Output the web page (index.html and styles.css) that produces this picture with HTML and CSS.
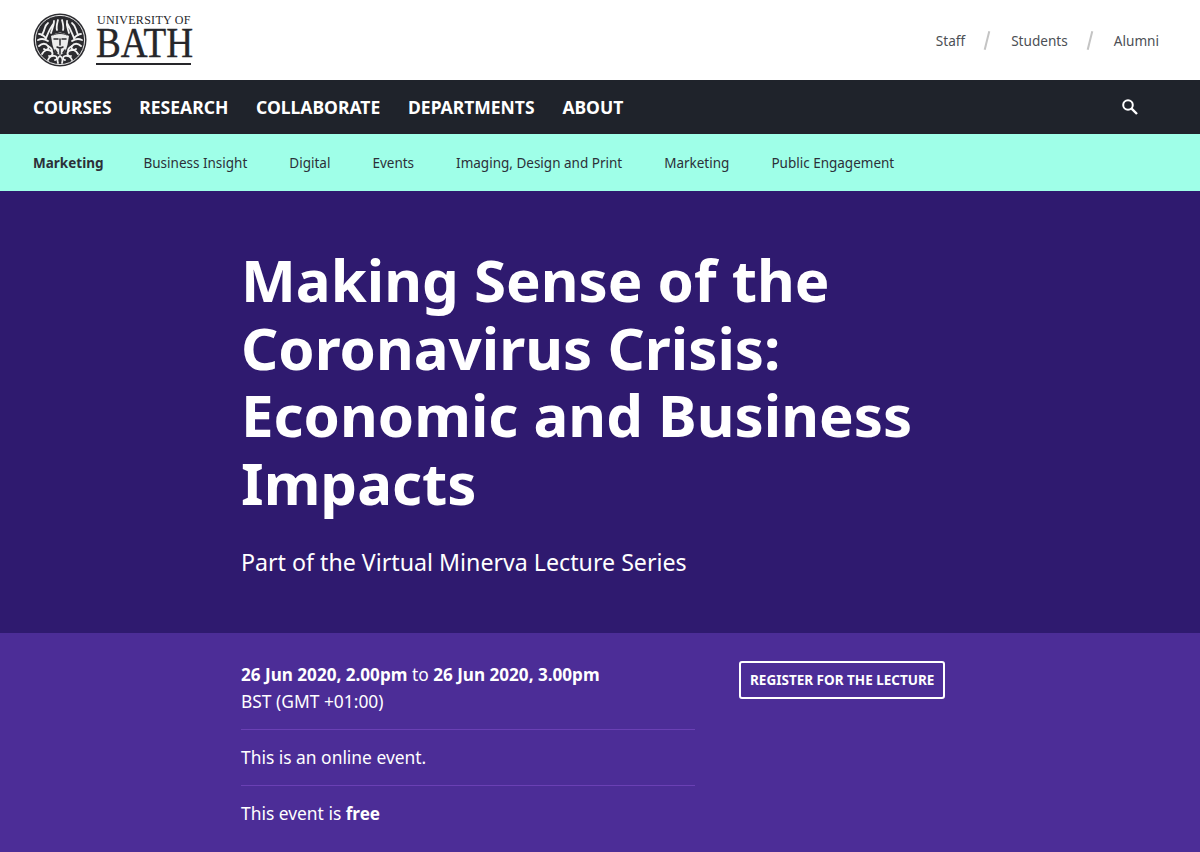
FILE: index.html
```html
<!DOCTYPE html>
<html lang="en">
<head>
<meta charset="utf-8">
<title>Making Sense of the Coronavirus Crisis</title>
<link rel="stylesheet" href="styles.css">
</head>
<body>
<header class="top">
  <a class="logo" href="#">
    <svg class="crest" width="54" height="54" viewBox="0 0 54 54" fill="none">
      <circle cx="27" cy="27" r="26.5" fill="#2b2b2f"/>
      <circle cx="27" cy="27" r="24.6" stroke="#e8e8e8" stroke-width="1"/>
      <g stroke="#f1f1f1" stroke-width="1.8" stroke-linecap="round">
        <path d="M9 22c4-7 2-9 6-12M13 25c3-7 4-10 8-15M18 20c1-4 3-7 3-12M24 17c-1-3 0-6 1-10M30 17c1-3 0-6-1-10M36 20c-1-4-3-7-2-12M41 25c-3-7-4-10-7-15M45 22c-3-7-2-9-6-12"/>
        <path d="M5 27c4-2 7-1 10 1M49 27c-4-2-7-1-10 1M6 21c3 0 5 2 7 4M48 21c-3 0-5 2-7 4"/>
        <path d="M6 33c3-3 7-3 9 0s-2 5-4 3M48 33c-3-3-7-3-9 0s2 5 4 3"/>
        <path d="M9 41c2-4 6-5 9-3s1 6-2 5M45 41c-2-4-6-5-9-3s-1 6 2 5"/>
        <path d="M15 47c1-3 4-5 7-4s2 4 0 4M39 47c-1-3-4-5-7-4s-2 4 0 4"/>
        <path d="M25 50c-1-3 0-6 2-7 2 1 3 4 2 7M15 33c2 1 4 3 4 5M39 33c-2 1-4 3-4 5"/>
      </g>
      <path d="M18 23q9-7 18 0l-1.500 9q-2 9-7.500 10q-5.500-1-7.500-10z" fill="#ececec"/>
      <g stroke="#2b2b2f" stroke-width="1.500" stroke-linecap="round">
        <path d="M21 26h4M29 26h4M27 26v6M24 34c2 1 4 1 6 0M22 37l2 3M32 37l-2 3M27 36v5"/>
        <path d="M20 22c4-2 10-2 14 0" stroke-width="1"/>
      </g>
    </svg>
    <span class="wordmark">
      <span class="uni">UNIVERSITY OF</span>
      <span class="bath">BATH</span>
    </span>
  </a>
  <nav class="audience">
    <a href="#">Staff</a><span class="slash"></span>
    <a href="#">Students</a><span class="slash"></span>
    <a href="#">Alumni</a>
  </nav>
</header>
<nav class="main">
  <ul class="main-links">
    <li><a href="#">COURSES</a></li>
    <li><a href="#">RESEARCH</a></li>
    <li><a href="#">COLLABORATE</a></li>
    <li><a href="#">DEPARTMENTS</a></li>
    <li><a href="#">ABOUT</a></li>
  </ul>
  <svg class="search" width="18" height="18" viewBox="0 0 18 18" fill="none" stroke="#fff">
    <circle cx="7" cy="7" r="4.8" stroke-width="2"/>
    <path d="M10.600 10.600l5.400 5.400" stroke-width="2.400"/>
  </svg>
</nav>
<nav class="sub">
  <a class="sub-current" href="#">Marketing</a>
  <a href="#">Business Insight</a>
  <a href="#">Digital</a>
  <a href="#">Events</a>
  <a href="#">Imaging, Design and Print</a>
  <a href="#">Marketing</a>
  <a href="#">Public Engagement</a>
</nav>
<section class="hero">
  <h1>Making Sense of the Coronavirus Crisis: Economic and Business Impacts</h1>
  <p class="lead">Part of the Virtual Minerva Lecture Series</p>
</section>
<section class="details">
  <div class="info">
    <div class="info-row when">
      <p><strong>26 Jun 2020, 2.00pm</strong> to <strong>26 Jun 2020, 3.00pm</strong></p>
      <p>BST (GMT +01:00)</p>
    </div>
    <div class="info-row"><p>This is an online event.</p></div>
    <div class="info-row"><p>This event is <strong>free</strong></p></div>
  </div>
  <a class="cta" href="#">REGISTER FOR THE LECTURE</a>
</section>
</body>
</html>
```
FILE: styles.css
```css
* { box-sizing: border-box; }
html, body { margin: 0; padding: 0; }
body {
  height: 852px;
  overflow: hidden;
  background: #4c2d97;
  font-family: "Noto Sans", "Open Sans", sans-serif;
  color: #fff;
}
a { color: inherit; text-decoration: none; }
p { margin: 0; }

.top {
  height: 80px;
  background: #fff;
  display: flex;
  align-items: center;
  justify-content: space-between;
  padding: 0 41px 0 33px;
}
.logo { display: flex; align-items: center; gap: 9px; color: #26262a; }
.crest { display: block; }
.wordmark { display: flex; flex-direction: column; width: 95px; border-bottom: 2px solid #26262a; padding-bottom: 4px; margin-top: -2px; }
.uni { font: 12px/13px "Liberation Serif", serif; letter-spacing: 0.3px; white-space: nowrap; margin-left: 1px; }
.bath {
  display: block;
  font: 42px/32px "Liberation Serif", serif;
  white-space: nowrap;
  transform: scaleX(0.885);
  transform-origin: left center;
  -webkit-text-stroke: 0.4px #26262a;
}

.audience { display: flex; align-items: center; font-size: 13.6px; color: #4c4f55; padding-top: 1px; }
.slash { width: 1.5px; height: 19px; background: #c4c4c4; transform: rotate(14deg); margin: 0 23.5px 0 21px; }

.main {
  height: 54px;
  background: #1f232b;
  display: flex;
  align-items: center;
  justify-content: space-between;
  padding: 0 61px 0 33px;
}
.main-links { display: flex; gap: 27.8px; margin: 0; padding: 0; list-style: none; font-size: 17.5px; font-weight: 700; }
.search { display: block; }

.sub {
  height: 57px;
  background: #9fffe8;
  display: flex;
  align-items: center;
  gap: 42px;
  padding: 0 33px;
  font-size: 13.5px;
  color: #2c3038;
}
.sub-current { font-weight: 700; margin-right: -2px; }

.hero { height: 442px; background: #2f1a6f; padding: 55px 241px 0; }
h1 { margin: 0; font-size: 58.2px; line-height: 67.7px; font-weight: 700; width: 700px; }
.lead { margin-top: 29px; font-size: 23.2px; line-height: 32px; }

.details { display: flex; align-items: flex-start; gap: 44px; padding: 28px 241px 0; }
.info { width: 454px; font-size: 17.4px; line-height: 27px; }
.info strong { font-size: 17.1px; }
.info-row { padding: 14px 0; border-top: 1px solid #6a40b4; }
.info-row:first-child { border-top: 0; padding-top: 0; }
.cta {
  display: block;
  padding: 0 9px;
  height: 38px;
  line-height: 34px;
  border: 2px solid #fff;
  border-radius: 3px;
  font-size: 13.5px;
  font-weight: 700;
  white-space: nowrap;
}
```
